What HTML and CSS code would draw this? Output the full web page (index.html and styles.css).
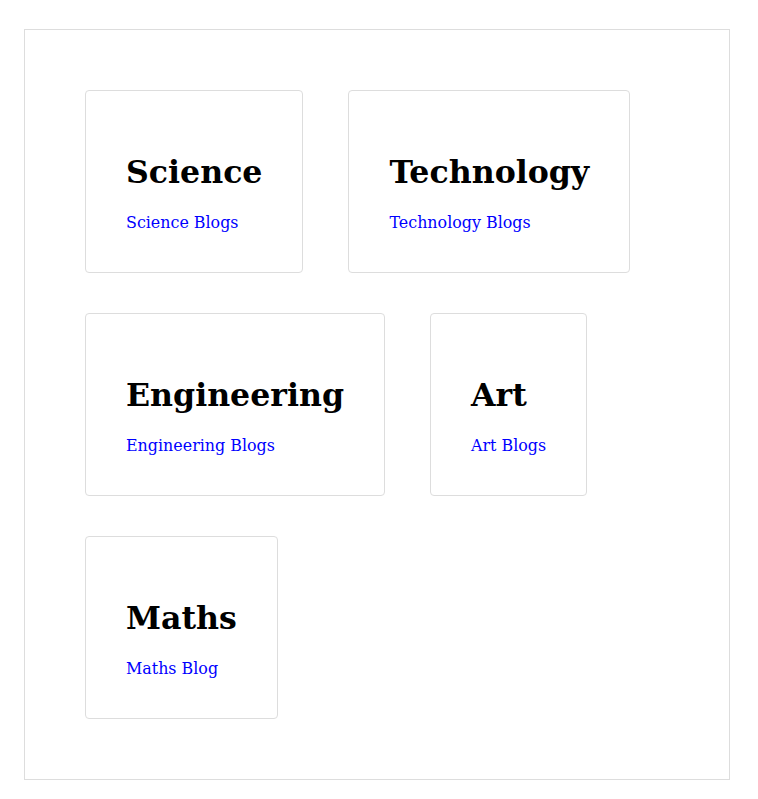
FILE: index.html
```html
<!DOCTYPE html>
<html>
<head>
<meta charset="utf-8">
<link rel="stylesheet" href="styles.css">
</head>
<body>
<div class="container">
  <div class="card"><h1>Science</h1><a href="#">Science Blogs</a></div>
  <div class="card"><h1>Technology</h1><a href="#">Technology Blogs</a></div>
  <div class="card"><h1>Engineering</h1><a href="#">Engineering Blogs</a></div>
  <div class="card"><h1>Art</h1><a href="#">Art Blogs</a></div>
  <div class="card"><h1>Maths</h1><a href="#">Maths Blog</a></div>
</div>
</body>
</html>
```
FILE: styles.css
```css
html, body {
  margin: 0;
  background: #fff;
}
body {
  font-family: "DejaVu Serif", serif;
  font-size: 16px;
}
.container {
  box-sizing: border-box;
  width: 706px;
  height: 751px;
  margin: 29px 0 0 24px;
  border: 1px solid #ddd;
  padding: 60px 60px;
  display: flex;
  flex-wrap: wrap;
  align-content: flex-start;
  column-gap: 45px;
  row-gap: 40px;
}
.card {
  border: 1px solid #ddd;
  border-radius: 4px;
  padding: 40px 40px;
  display: flex;
  flex-direction: column;
  align-items: flex-start;
}
.card h1 {
  margin: 21.5px 0 23.5px;
  font-size: 31.6px;
  font-weight: bold;
  color: #000;
}
.card a {
  color: #00f;
  font-size: 15.9px;
  text-decoration: none;
}
```
